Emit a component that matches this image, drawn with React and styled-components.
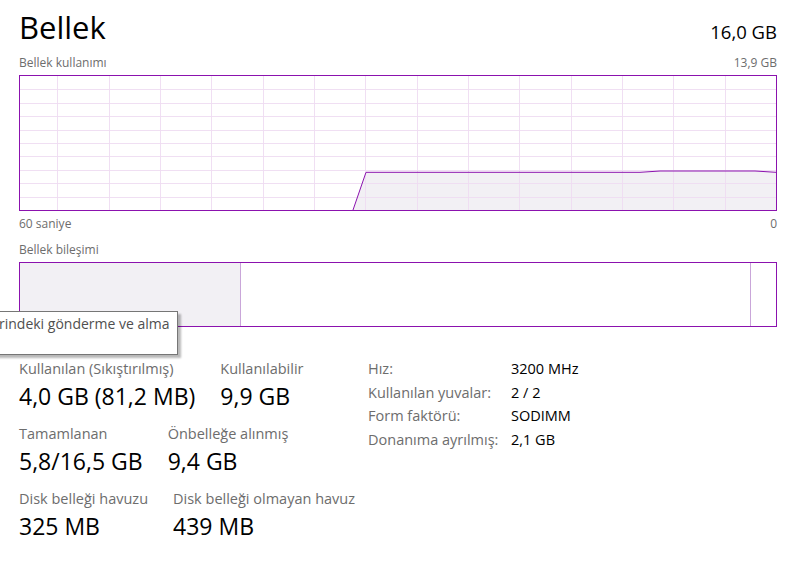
import { Fragment } from 'react'
import styled, { createGlobalStyle } from 'styled-components'

const GlobalStyle = createGlobalStyle`
  html, body {
    margin: 0;
    padding: 0;
    background: #ffffff;
    overflow: hidden;
  }
  body {
    font-family: "Open Sans", "Noto Sans", "Liberation Sans", sans-serif;
  }
`;

const PURPLE = '#8b12ae';
const GRID = '#eedcf2';

const Page = styled.div`
  position: relative;
  width: 798px;
  height: 567px;
  box-sizing: border-box;
  padding: 7px 21px 0 19px;
`;

const Header = styled.div`
  display: flex;
  justify-content: space-between;
  align-items: baseline;
  height: 39px;
`;

const Title = styled.div`
  font-size: 31px;
  line-height: 40px;
  color: #000;
`;

const Total = styled.div`
  font-size: 18.5px;
  color: #000;
`;

const CaptionRow = styled.div`
  display: flex;
  justify-content: space-between;
  margin-top: ${({ gap }) => gap}px;
  height: 16px;
`;

const Caption = styled.span`
  font-size: 12px;
  line-height: 16px;
  color: #6d6d6d;
`;

const Chart = styled.div`
  margin-top: 4px;
  height: 136px;
  border: 1px solid ${PURPLE};
  box-sizing: border-box;
  svg {
    display: block;
  }
`;

const Composition = styled.div`
  margin-top: 4px;
  height: 65px;
  border: 1px solid ${PURPLE};
  box-sizing: border-box;
  display: flex;
`;

const Segment = styled.div`
  width: ${({ w }) => (w ? `${w}px` : 'auto')};
  flex: ${({ w }) => (w ? 'none' : '1')};
  background: ${({ fill }) => fill || '#fff'};
  border-right: ${({ edge }) => (edge ? '1px solid #c9a6d9' : 'none')};
`;

const Stats = styled.div`
  display: flex;
  margin-top: 32px;
`;

const LeftStats = styled.div`
  width: 349px;
  display: flex;
  flex-direction: column;
  gap: 13px;
`;

const StatRow = styled.div`
  display: flex;
  gap: 25px;
`;

const Stat = styled.div`
  display: flex;
  flex-direction: column;
  gap: 2px;
`;

const Label = styled.div`
  font-size: 14.5px;
  line-height: 20px;
  color: #6d6d6d;
  white-space: nowrap;
`;

const Value = styled.div`
  font-size: 23px;
  line-height: 30px;
  color: #000;
  white-space: nowrap;
`;

const Props = styled.div`
  margin-top: -2px;
  display: grid;
  grid-template-columns: 143px auto;
  grid-auto-rows: 23.7px;
  font-size: 14.5px;
  line-height: 23.7px;
`;

const PropName = styled.span`
  color: #6d6d6d;
  white-space: nowrap;
`;

const PropValue = styled.span`
  color: #000;
  white-space: nowrap;
`;

const Tooltip = styled.div`
  position: absolute;
  top: 311px;
  left: -12px;
  width: 190px;
  height: 44px;
  box-sizing: border-box;
  border: 1px solid #767676;
  background: #fff;
  box-shadow: 3px 3px 2px rgba(0, 0, 0, 0.28);
  padding: 2px 10px 0;
  font-size: 14px;
  line-height: 20px;
  color: #4f4f4f;
  white-space: nowrap;
  overflow: hidden;
`;

const W = 756;
const H = 134;

function UsageChart() {
  const cols = [];
  for (let k = 1; k <= 14; k++) cols.push(W - (k * W) / 14.73);
  const rows = [];
  for (let k = 1; k <= 9; k++) rows.push((k * H) / 10);
  const area = 'M333,134 L346,96.3 L620,96.3 L640,95 L735,95 L756,96.3 L756,134 Z';
  const line = 'M333,134 L346,96.3 L620,96.3 L640,95 L735,95 L756,96.3';
  return (
    <svg width={W} height={H} viewBox={`0 0 ${W} ${H}`}>
      <path d={area} fill="#f2f0f4" />
      {cols.map((x) => (
        <line key={'c' + x} x1={Math.round(x) + 0.5} x2={Math.round(x) + 0.5} y1="0" y2={H} stroke={GRID} strokeOpacity="0.9" />
      ))}
      {rows.map((y) => (
        <line key={'r' + y} x1="0" x2={W} y1={Math.round(y) + 0.5} y2={Math.round(y) + 0.5} stroke={GRID} strokeOpacity="0.9" />
      ))}
      <path d={line} fill="none" stroke={PURPLE} strokeWidth="1" />
    </svg>
  );
}

const stats = [
  [['Kullanılan (Sıkıştırılmış)', '4,0 GB (81,2 MB)'], ['Kullanılabilir', '9,9 GB']],
  [['Tamamlanan', '5,8/16,5 GB'], ['Önbelleğe alınmış', '9,4 GB']],
  [['Disk belleği havuzu', '325 MB'], ['Disk belleği olmayan havuz', '439 MB']],
];

const props = [
  ['Hız:', '3200 MHz'],
  ['Kullanılan yuvalar:', '2 / 2'],
  ['Form faktörü:', 'SODIMM'],
  ['Donanıma ayrılmış:', '2,1 GB'],
];

export default function App() {
  return (
    <Page>
      <GlobalStyle />
      <Header>
        <Title>Bellek</Title>
        <Total>16,0 GB</Total>
      </Header>
      <CaptionRow gap={9}>
        <Caption>Bellek kullanımı</Caption>
        <Caption>13,9 GB</Caption>
      </CaptionRow>
      <Chart>
        <UsageChart />
      </Chart>
      <CaptionRow gap={5}>
        <Caption>60 saniye</Caption>
        <Caption>0</Caption>
      </CaptionRow>
      <CaptionRow gap={10}>
        <Caption>Bellek bileşimi</Caption>
      </CaptionRow>
      <Composition>
        <Segment w={220} fill="#f2f0f4" edge />
        <Segment edge />
        <Segment w={25} />
      </Composition>
      <Stats>
        <LeftStats>
          {stats.map((row, i) => (
            <StatRow key={i}>
              {row.map(([label, value]) => (
                <Stat key={label}>
                  <Label>{label}</Label>
                  <Value>{value}</Value>
                </Stat>
              ))}
            </StatRow>
          ))}
        </LeftStats>
        <Props>
          {props.map(([name, value]) => (
            <Fragment key={name}>
              <PropName>{name}</PropName>
              <PropValue>{value}</PropValue>
            </Fragment>
          ))}
        </Props>
      </Stats>
      <Tooltip>rindeki gönderme ve alma</Tooltip>
    </Page>
  );
}
